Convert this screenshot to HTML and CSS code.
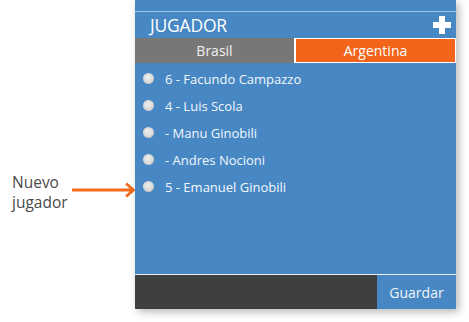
FILE: index.html
```html
<!DOCTYPE html>
<html lang="en">
<head>
  <meta charset="UTF-8">
  <title>Jugador</title>
  <link rel="stylesheet" href="styles.css">
</head>
<body>
  <div class="page">
    <div class="note">
      <span class="note-text">Nuevo<br>jugador</span>
      <svg class="arrow" width="68" height="16" viewBox="0 0 68 16">
        <path d="M0 8H66M58 1L66 8L58 15" fill="none" stroke="#f26a1b" stroke-width="3"/>
      </svg>
    </div>

    <div class="panel">
      <div class="top-strip"></div>
      <div class="header">
        <h1>JUGADOR</h1>
        <svg class="add" width="20" height="20" viewBox="0 0 20 20">
          <path d="M7 1H13V7H19V13H13V19H7V13H1V7H7Z" fill="#fff"/>
        </svg>
      </div>
      <div class="tabs">
        <div class="tab">Brasil</div>
        <div class="tab active">Argentina</div>
      </div>
      <ul class="players">
        <li><span class="radio"></span>6 - Facundo Campazzo</li>
        <li><span class="radio"></span>4 - Luis Scola</li>
        <li><span class="radio"></span>- Manu Ginobili</li>
        <li><span class="radio"></span>- Andres Nocioni</li>
        <li><span class="radio"></span>5 - Emanuel Ginobili</li>
      </ul>
      <div class="footer">
        <div class="footer-space"></div>
        <button class="save">Guardar</button>
      </div>
    </div>
  </div>
</body>
</html>
```

FILE: styles.css
```css
body {
  margin: 0;
  background: #fff;
  font-family: 'Open Sans', 'Noto Sans', sans-serif;
}
.page {
  display: flex;
  width: 469px;
  height: 322px;
}
.note {
  width: 135px;
  display: flex;
  align-items: center;
  padding-top: 166px;
  align-self: flex-start;
  box-sizing: border-box;
}
.note-text {
  width: 58px;
  font-size: 15.5px;
  line-height: 20px;
  color: #4a4a4a;
  margin-left: 12px;
  margin-top: 6px;
}
.arrow {
  margin-left: 4px;
  margin-top: 2px;
}
.panel {
  width: 321px;
  height: 309px;
  background: #4687c4;
  display: flex;
  flex-direction: column;
  box-shadow: 3px 3px 8px rgba(0,0,0,0.28);
}
.top-strip {
  height: 11px;
  border-bottom: 1px solid #9cc2e6;
}
.header {
  height: 26px;
  display: flex;
  align-items: center;
  justify-content: space-between;
  padding: 0 4px 0 15px;
}
.header h1 {
  margin: 0;
  font-size: 17.5px;
  font-weight: normal;
  color: #fff;
  letter-spacing: -0.2px;
}
.tabs {
  display: flex;
  height: 25px;
}
.tab {
  flex: 1;
  display: flex;
  align-items: center;
  justify-content: center;
  background: #777;
  color: #f2f2f2;
  font-size: 14px;
}
.tab.active {
  background: #f26419;
  border: 2px solid #fff;
  border-width: 1px 1px 1px 2px;
  color: #fff;
}
.players {
  list-style: none;
  margin: 0;
  padding: 2px 0 0 0;
  flex: 1;
}
.players li {
  height: 27px;
  display: flex;
  align-items: center;
  color: #f4f7fa;
  font-size: 13px;
}
.radio {
  width: 11px;
  height: 11px;
  border-radius: 50%;
  background: radial-gradient(circle at 45% 40%, #f0f0f0 0, #d8d8d8 55%, #a9a9a9 100%);
  margin: 0 11px 0 8px;
}
.footer {
  display: flex;
  height: 34px;
  border-top: 1px solid #e8eef5;
}
.footer-space {
  flex: 1;
  background: #3f3f3f;
}
.save {
  width: 79px;
  background: #4687c4;
  border: none;
  color: #f2f5f8;
  font-family: inherit;
  font-size: 14px;
  padding: 0;
}
```
